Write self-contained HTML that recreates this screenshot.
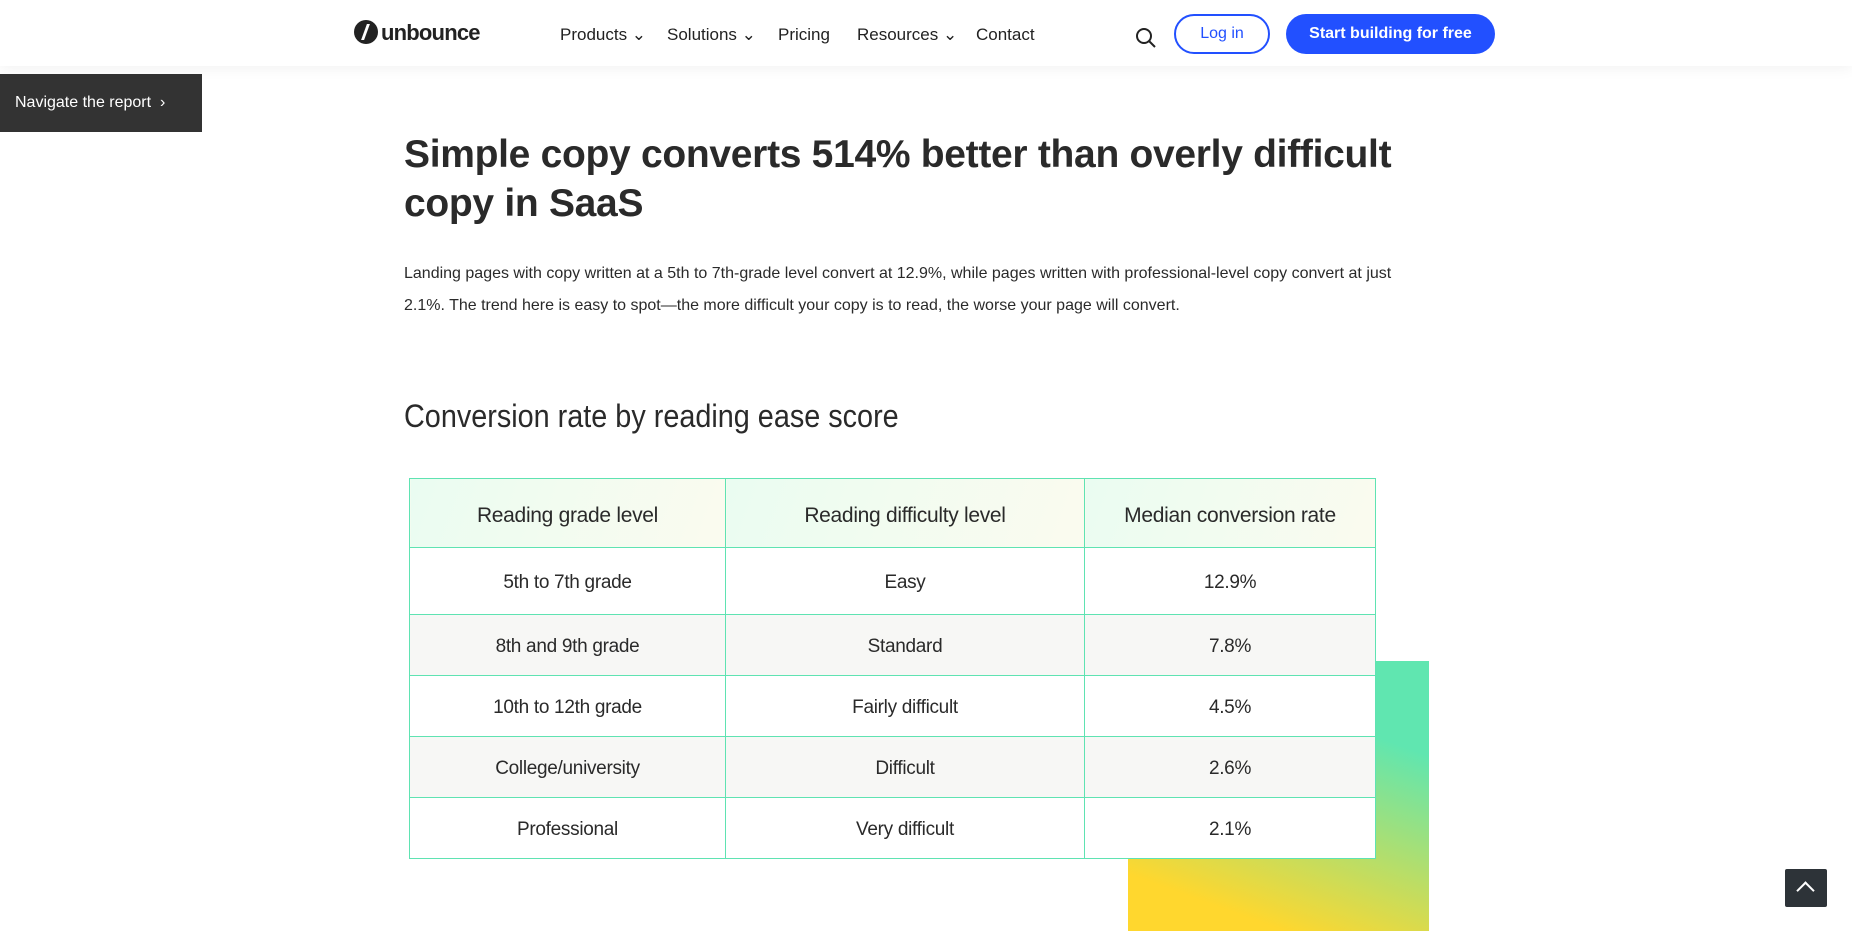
<!DOCTYPE html>
<html><head><meta charset="utf-8"><style>
*{margin:0;padding:0;box-sizing:border-box}
body{width:1852px;height:931px;overflow:hidden;background:#fff;font-family:"Liberation Sans",sans-serif;color:#2a2a2a;position:relative}
.nav{position:absolute;left:0;top:0;width:1852px;height:66px;background:#fff;box-shadow:0 2px 14px rgba(0,0,0,.06);z-index:2}
.nav a{position:absolute;top:25px;font-size:17px;color:#222;white-space:nowrap}
.logo{position:absolute;left:354px;top:20px;font-size:22px;font-weight:bold;color:#222;letter-spacing:-0.8px}
.logo span{display:inline-block;width:24px;height:24px;border-radius:50%;background:#222;vertical-align:-4px;margin-right:3px;position:relative}
.logo span:after{content:"";position:absolute;left:10px;top:4px;width:3px;height:16px;background:#fff;transform:skewX(-20deg)}
.btn1{position:absolute;left:1174px;top:14px;width:96px;height:40px;border:2px solid #2250ff;border-radius:20px;color:#2250ff;font-size:16px;text-align:center;line-height:36px}
.btn2{position:absolute;left:1286px;top:14px;width:209px;height:40px;background:#2250ff;border-radius:20px;color:#fff;font-size:16px;font-weight:bold;text-align:center;line-height:40px}
.navrep{position:absolute;left:0;top:74px;width:202px;height:58px;background:#333;color:#fff;font-size:16px;line-height:58px;padding-left:15px}
h1{position:absolute;left:404px;top:130px;width:1020px;font-size:39px;line-height:49px;font-weight:bold;color:#2a2a2a;letter-spacing:-0.3px}
p{position:absolute;left:404px;top:258px;width:1010px;font-size:16px;line-height:32px;color:#2a2a2a}
h2{position:absolute;left:404px;top:398px;font-size:32px;font-weight:normal;font-family:"Liberation Sans Narrow","Liberation Sans",sans-serif;color:#2a2a2a;transform:scaleX(0.9);transform-origin:left}
.grad{position:absolute;left:1128px;top:661px;width:301px;height:270px;background:linear-gradient(200deg,#60e6b0 0%,#60e6b0 25%,#ffd72e 85%)}
table{position:absolute;left:409px;top:478px;width:967px;border-collapse:collapse;font-family:"Liberation Sans Narrow","Liberation Sans",sans-serif;font-size:19px;color:#2a2a2a;background:#fff;letter-spacing:-0.3px}
td,th{border:1px solid #5fe3b2;text-align:center;height:61px;padding-top:3px}
th{height:69px;font-weight:normal;font-size:21px;background:linear-gradient(110deg,#eafcf1,#fbfbef);padding-top:6px}
tr:nth-child(odd) td{background:#f7f7f5}
.top{position:absolute;left:1785px;top:869px;width:42px;height:38px;background:#2d3338;border-radius:2px}
.top:after{content:"";position:absolute;left:14px;top:15px;width:11px;height:11px;border-left:2.5px solid #fff;border-top:2.5px solid #fff;transform:rotate(45deg)}
</style></head><body>
<div class="nav">
<div class="logo"><span></span>unbounce</div>
<a style="left:560px">Products ⌄</a>
<a style="left:667px">Solutions ⌄</a>
<a style="left:778px">Pricing</a>
<a style="left:857px">Resources ⌄</a>
<a style="left:976px">Contact</a>
<svg style="position:absolute;left:1135px;top:27px" width="22" height="22" viewBox="0 0 22 22"><circle cx="9" cy="9" r="7" fill="none" stroke="#222" stroke-width="2"/><path d="M14 14l6 6" stroke="#222" stroke-width="2"/></svg>
<div class="btn1">Log in</div>
<div class="btn2">Start building for free</div>
</div>
<div class="navrep">Navigate the report &nbsp;›</div>
<h1>Simple copy converts 514% better than overly difficult copy in SaaS</h1>
<p>Landing pages with copy written at a 5th to 7th-grade level convert at 12.9%, while pages written with professional-level copy convert at just 2.1%. The trend here is easy to spot—the more difficult your copy is to read, the worse your page will convert.</p>
<h2>Conversion rate by reading ease score</h2>
<div class="grad"></div>
<table>
<tr><th style="width:316px">Reading grade level</th><th style="width:359px">Reading difficulty level</th><th>Median conversion rate</th></tr>
<tr><td style="height:67px">5th to 7th grade</td><td>Easy</td><td>12.9%</td></tr>
<tr><td>8th and 9th grade</td><td>Standard</td><td>7.8%</td></tr>
<tr><td>10th to 12th grade</td><td>Fairly difficult</td><td>4.5%</td></tr>
<tr><td>College/university</td><td>Difficult</td><td>2.6%</td></tr>
<tr><td>Professional</td><td>Very difficult</td><td>2.1%</td></tr>
</table>
<div class="top"></div>
</body></html>
